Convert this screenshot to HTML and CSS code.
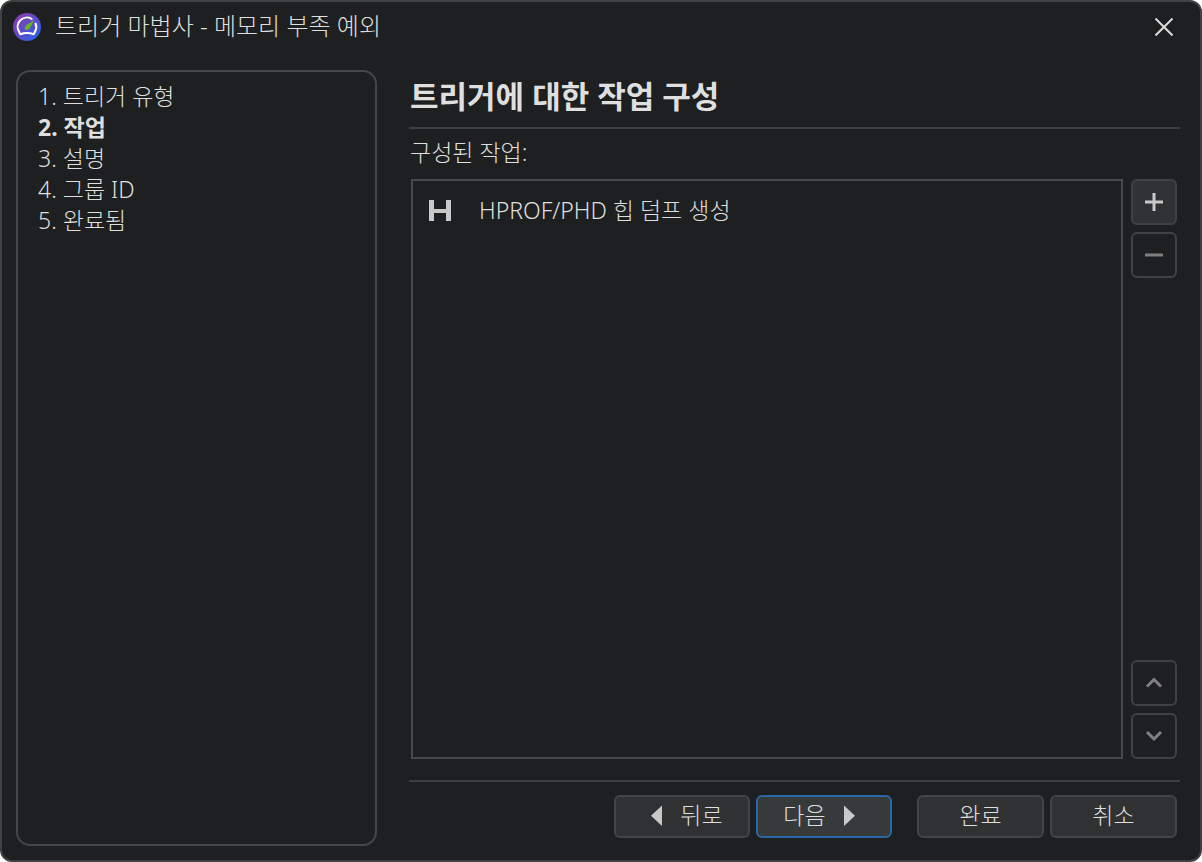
FILE: index.html
```
<!DOCTYPE html>
<html lang="ko">

<head>
    <meta charset="UTF-8">
    <meta name="viewport" content="width=device-width, initial-scale=1.0">
    <title>트리거 마법사</title>
    <link rel="stylesheet" href="styles.css">
</head>
<body>
    <div class="dialog">
        <header class="titlebar">
            <svg class="logo" width="28" height="28" viewBox="0 0 28 28" aria-hidden="true">
                <defs>
                    <linearGradient id="logoBg" x1="0" y1="0" x2="1" y2="1">
                        <stop offset="0.1" stop-color="#8a3ab0"/>
                        <stop offset="0.9" stop-color="#2f60e4"/>
                    </linearGradient>
                </defs>
                <circle cx="14" cy="14" r="14" fill="url(#logoBg)"/>
                <path d="M18.6 5.9A9.2 9.2 0 0 0 6 18.6L7.2 21.2Q14 18.8 20.8 21.2L22 18.6A9.2 9.2 0 0 0 22.6 10.6" fill="none" stroke="#fff" stroke-width="2" stroke-linecap="round" stroke-linejoin="round"/>
                <path d="M21.4 7L16.6 15.5Q14.6 17.6 12.2 16.6Q11.2 14.4 12.8 12.4Z" fill="#62b81c"/>
            </svg>
            <span class="title">트리거 마법사 - 메모리 부족 예외</span>
            <button class="close" type="button" aria-label="닫기">
                <svg width="18" height="18" viewBox="0 0 18 18"><path d="M0.5 0.5L17.5 17.5M17.5 0.5L0.5 17.5"/></svg>
            </button>
        </header>
        <div class="content">
            <ol class="steps">
                <li>1. 트리거 유형</li>
                <li class="active">2. 작업</li>
                <li>3. 설명</li>
                <li>4. 그룹 ID</li>
                <li>5. 완료됨</li>
            </ol>
            <main class="panel">
                <h1>트리거에 대한 작업 구성</h1>
                <div class="label" id="actions">구성된 작업:</div>
                <div class="editor">
                    <ul class="list" aria-labelledby="actions">
                        <li>
                            <svg width="22" height="22" viewBox="0 0 22 22" aria-hidden="true"><path d="M0 1H5V10H17V1H22V22H17V14H5V22H0Z" fill="#c8c8c8"/></svg>
                            <span>HPROF/PHD 힙 덤프 생성</span>
                        </li>
                    </ul>
                    <div class="tools">
                        <button class="tool on" type="button" aria-label="추가">
                            <svg width="20" height="20" viewBox="0 0 20 20"><path d="M10 1V19M1 10H19"/></svg>
                        </button>
                        <button class="tool" type="button" aria-label="제거">
                            <svg width="20" height="20" viewBox="0 0 20 20"><path d="M1 10H19"/></svg>
                        </button>
                        <button class="tool up" type="button" aria-label="위로">
                            <svg width="20" height="20" viewBox="0 0 20 20"><path d="M3 13.5L10 6.5L17 13.5"/></svg>
                        </button>
                        <button class="tool" type="button" aria-label="아래로">
                            <svg width="20" height="20" viewBox="0 0 20 20"><path d="M3 6L10 13L17 6"/></svg>
                        </button>
                    </div>
                </div>
                <footer class="buttons">
                    <button class="btn nav back" type="button">
                        <svg width="11" height="22" viewBox="0 0 11 22" aria-hidden="true"><path d="M11 1.5V22L0 11.7Z"/></svg>
                        뒤로
                    </button>
                    <button class="btn nav next" type="button">
                        다음
                        <svg width="11" height="22" viewBox="0 0 11 22" aria-hidden="true"><path d="M0 1.5V22L11 11.7Z"/></svg>
                    </button>
                    <button class="btn finish" type="button">완료</button>
                    <button class="btn" type="button">취소</button>
                </footer>
            </main>
        </div>
    </div>
</body>
</html>
```
FILE: styles.css
```
* {
    box-sizing: border-box;
}
body {
    margin: 0;
    background: #fff;
    color: #dfdfdf;
    font: 300 23px/32px "Noto Sans", "Noto Sans CJK KR", sans-serif;
}
h1, ol, ul {
    margin: 0;
    padding: 0;
    list-style: none;
}
svg {
    display: block;
    flex: none;
}
button {
    padding: 0;
    color: inherit;
    font: inherit;
}
.dialog {
    display: flex;
    flex-direction: column;
    min-height: 100vh;
    border: 2px solid #3f4042;
    border-radius: 12px;
    background: #1e1f21;
}
.titlebar {
    display: flex;
    align-items: center;
    height: 50px;
    padding: 0 25px 0 11px;
}
.title {
    margin-left: 14px;
    padding-bottom: 2px;
    font-size: 24px;
}
.close {
    margin-left: auto;
    padding: 2px;
    border: 0;
    background: none;
}
.close path {
    fill: none;
    stroke: #dcdcdc;
    stroke-width: 2;
}
.content {
    flex: 1;
    display: flex;
    gap: 32px;
    padding: 18px 20px 14px 14px;
}
.steps {
    flex: 0 0 361px;
    padding: 9px 20px;
    border: 2px solid #454648;
    border-radius: 14px;
    line-height: 31px;
}
.active {
    font-weight: bold;
}
.panel {
    flex: 1;
    display: flex;
    flex-direction: column;
}
h1 {
    padding: 5px 0 10px 1px;
    border-bottom: 2px solid #3d3e40;
    font-size: 31px;
    line-height: 42px;
}
.label {
    padding: 7px 0 11px 1px;
}
.editor {
    flex: 1;
    display: flex;
    gap: 8px;
    padding: 0 3px 21px 2px;
    border-bottom: 2px solid #3d3e40;
}
.list {
    flex: 1;
    border: 2px solid #48494b;
}
.list li {
    display: flex;
    align-items: center;
    gap: 28px;
    padding: 13px 16px;
}
.tools {
    display: flex;
    flex-direction: column;
    gap: 7px;
}
.tool {
    display: flex;
    align-items: center;
    justify-content: center;
    width: 46px;
    height: 46px;
    border: 2px solid #404143;
    border-radius: 6px;
    background: none;
}
.tool path {
    fill: none;
    stroke: #808080;
    stroke-width: 3;
}
.tool.on {
    background: #303133;
}
.tool.on path {
    stroke: #c8c8c8;
}
.tool.up {
    margin-top: auto;
}
.buttons {
    display: flex;
    justify-content: flex-end;
    gap: 6px;
    padding: 13px 3px 8px;
}
.btn {
    display: flex;
    align-items: center;
    justify-content: center;
    width: 127px;
    height: 43px;
    padding-bottom: 3px;
    border: 2px solid #434446;
    border-radius: 6px;
    background: #303133;
}
.nav {
    gap: 18px;
    width: 136px;
}
.nav path {
    fill: #c8c8c8;
}
.back {
    padding-left: 10px;
}
.next {
    padding-right: 10px;
    border-color: #2a67a5;
    background: #373a3b;
}
.finish {
    margin-left: 19px;
}
```
